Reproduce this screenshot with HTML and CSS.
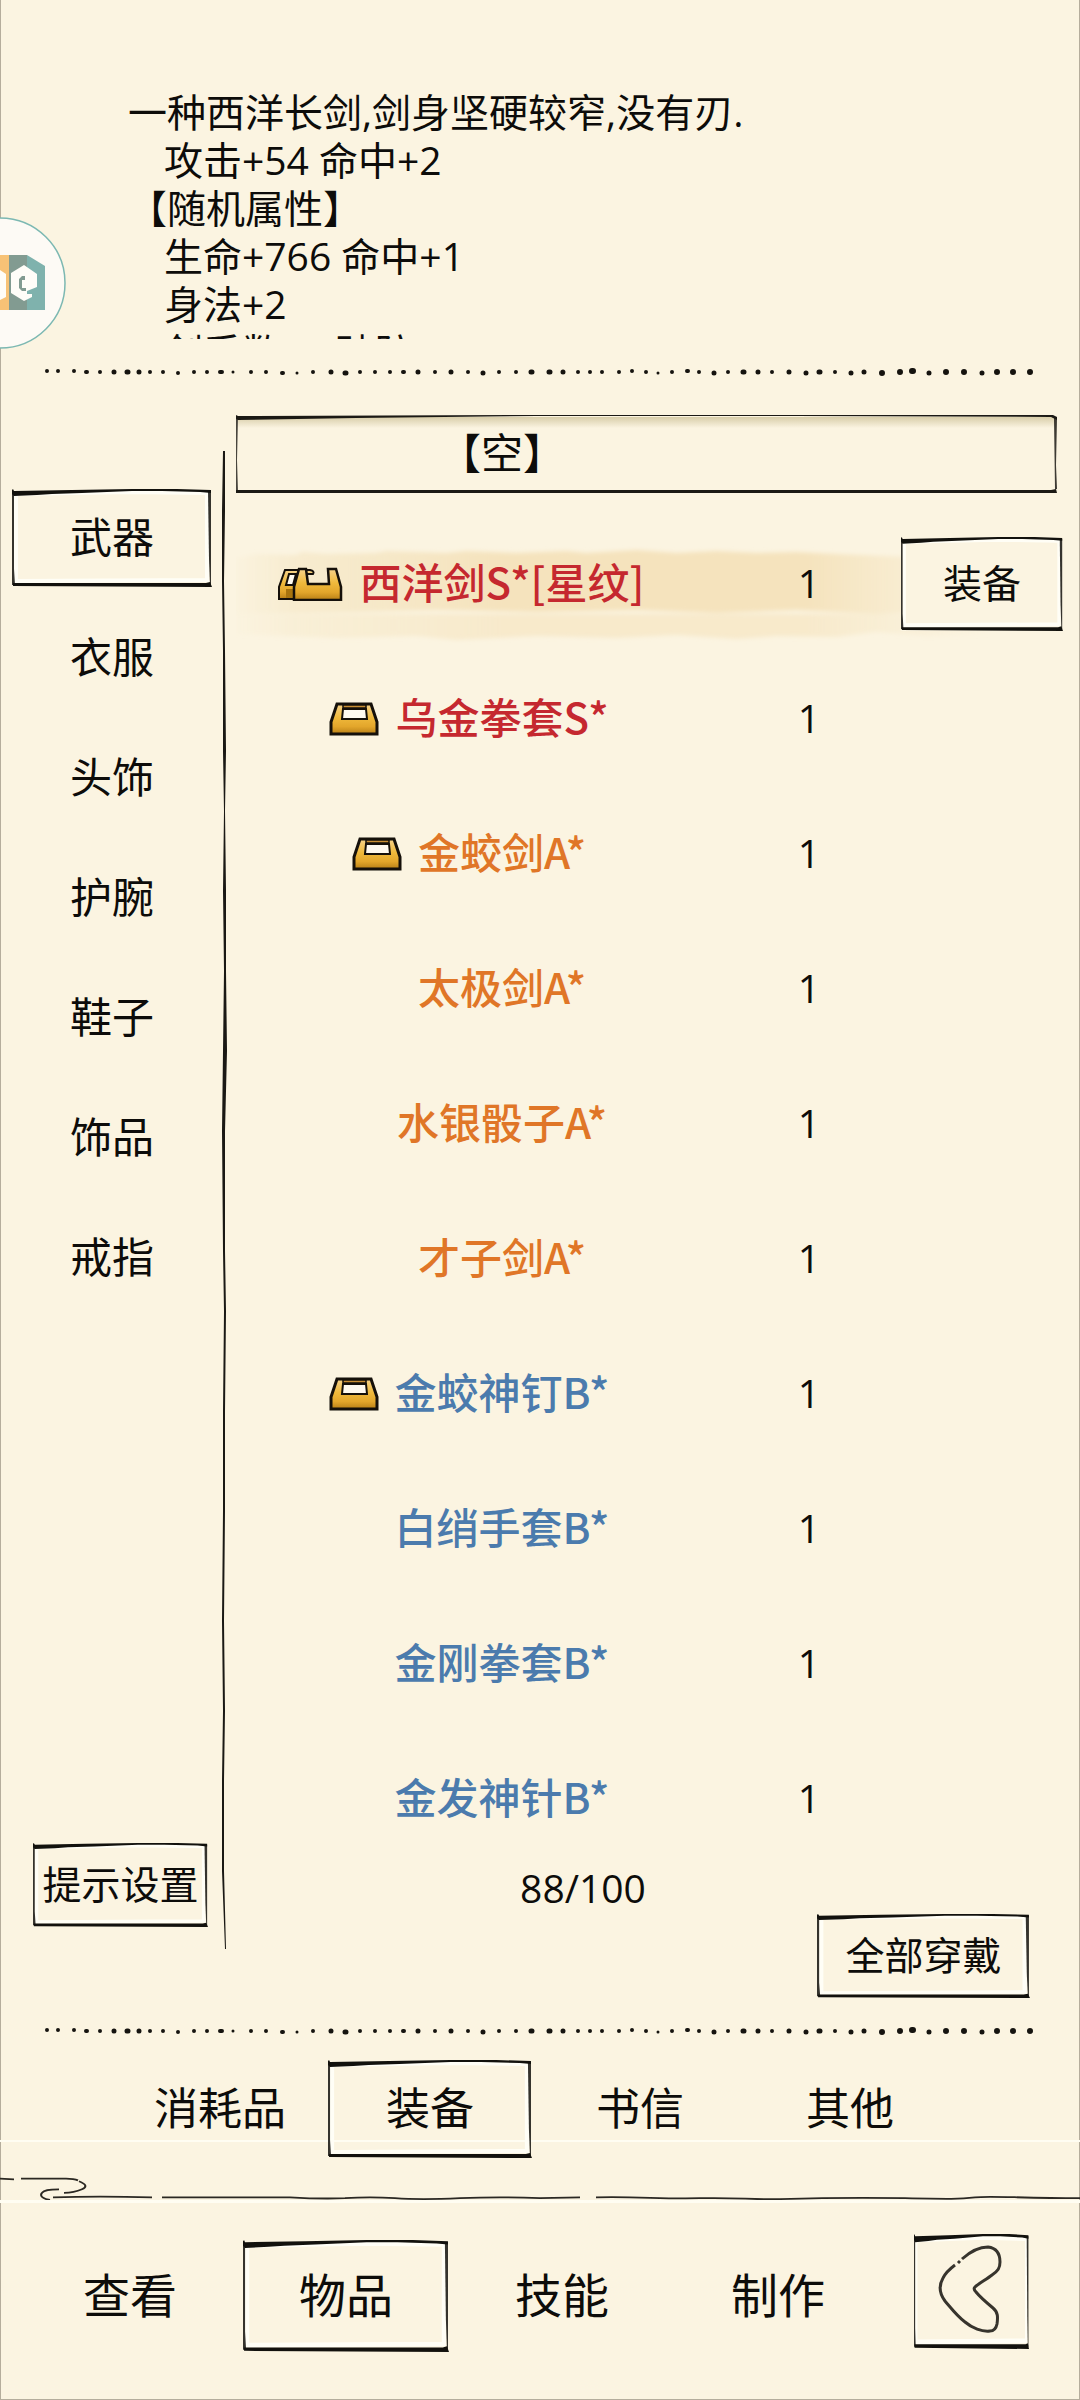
FILE: index.html
```html
<!DOCTYPE html>
<html lang="zh-CN">

<head>
    <meta charset="UTF-8">
    <meta name="viewport" content="width=device-width, initial-scale=1.0">
    <title>物品</title>
    <link rel="stylesheet" href="styles.css">
</head>

<body>
    <!-- shared drawings -->
    <svg class="defs" aria-hidden="true">
        <defs>
            <linearGradient id="gold" x1="0" y1="0" x2="0" y2="1">
                <stop offset="0" stop-color="#f6d28a" />
                <stop offset=".45" stop-color="#efb93c" />
                <stop offset=".75" stop-color="#e3a62b" />
                <stop offset="1" stop-color="#b87f16" />
            </linearGradient>
            <symbol id="ingot" viewBox="0 0 50 34">
                <path d="M8 2H42L48 20V32H2V20Z" fill="url(#gold)" stroke="#15100a" stroke-width="3" />
                <path d="M14 3H37V6H14Z" fill="#c98f35" stroke="#15100a" stroke-width="1.5" />
                <path d="M14 7H37L38 17H13Z" fill="#fffaf0" stroke="#15100a" stroke-width="2" />
            </symbol>
            <symbol id="ingots" viewBox="0 0 66 34">
                <path d="M8 3H33Q38 4 36 7H28L22 32H2V20Z" fill="url(#gold)" stroke="#15100a" stroke-width="2" />
                <path d="M12 7H19L16 18H9Z" fill="#fffaf0" stroke="#15100a" stroke-width="2" />
                <path d="M9 22H17V31H9Z" fill="#a8740f" />
                <path d="M22 2H29L31 17H52L51 2H59L64 20V33H17V20Z" fill="url(#gold)" stroke="#15100a" stroke-width="2.5" />
            </symbol>
            <symbol id="dots" viewBox="0 0 1080 10" preserveAspectRatio="none">
                <g stroke="#15130f" stroke-linecap="round" fill="none">
                    <path stroke-width="4" d="M47 4h0M58 4h0M74 4h0M86 5h1M100 5h0M150 5h0M163 5h0M178 6h0M194 5h0M207 5h0M220 5h2M251 5h0M266 5h0M282 6h1M313 5h0M360 5h0M375 5h0M390 5h0M403 5h1M435 5h0M468 5h0M499 5h0M516 5h0M578 5h0M590 5h0M602 5h0M619 5h0M632 4h0M646 5h0M672 5h0M687 4h1M699 5h0M728 5h0M772 5h0M835 5h0" />
                    <path stroke-width="3" d="M233 5h0M297 6h0M658 6h0" />
                    <path stroke-width="5" d="M114 5h0M127 5h1M139 5h0M331 5h0M345 6h1M418 5h0M451 5h0M483 6h0M531 5h1M549 5h1M563 5h0M714 6h0M743 5h1M758 5h0M789 5h0M806 6h0M819 5h1M851 6h0M864 5h0M929 6h0M982 6h0" />
                    <path stroke-width="6" d="M882 6h0M900 5h0M912 4h1M946 5h0M964 5h0M997 5h0M1013 5h0M1030 5h0" />
                </g>
            </symbol>
        </defs>
    </svg>

    <div class="page">
        <button class="floating" type="button" aria-label="悬浮菜单">
            <svg viewBox="0 0 66 132">
                <circle cx="0" cy="66" r="65" fill="#fdfaf5" stroke="#7cb8b2" stroke-width="1.5" />
                <path d="M0 38H9V93H0Z" fill="#f7c276" />
                <path d="M9 38H27V93H9Z" fill="#829b91" />
                <path d="M27 38L45 49V93H27Z" fill="#7fb2ad" />
                <path d="M0 53L6 57V80L0 83Z" fill="#fffdf8" />
                <path d="M24 48L37 57V70L27 74V77H32V80L24 84L11 76V56Z" fill="#fffdf8" />
                <path d="M22 59H25V63H22V71H26V74H22L19 71V62Z" fill="#829b91" />
            </svg>
        </button>

        <section class="info">
            <p>一种西洋长剑,剑身坚硬较窄,没有刃.</p>
            <p class="attr">攻击+54 命中+2</p>
            <p>【随机属性】</p>
            <p class="attr">生命+766 命中+1</p>
            <p class="attr">身法+2</p>
            <p class="attr">剑系数+2 破防+20</p>
        </section>

        <svg class="dots" preserveAspectRatio="none"><use href="#dots" /></svg>

        <main class="bag">
            <nav class="side">
                <button class="side-item sketch" type="button">武器</button>
                <button class="side-item" type="button">衣服</button>
                <button class="side-item" type="button">头饰</button>
                <button class="side-item" type="button">护腕</button>
                <button class="side-item" type="button">鞋子</button>
                <button class="side-item" type="button">饰品</button>
                <button class="side-item" type="button">戒指</button>
                <button class="tips sketch" type="button">提示设置</button>
            </nav>

            <svg class="divider" viewBox="0 0 8 1498" preserveAspectRatio="none">
                <path d="M3 0L5 0L5 60L4 130L5 200L6 300L5 360L6 440L6 520L7 600L5 680L5 800L6 860L5 960L5 1060L4 1170L5 1260L4 1330L4 1420L6 1498L5 1498L2 1420L2 1330L3 1260L2 1170L3 1060L3 960L4 860L3 800L2 680L3 600L4 520L3 440L4 360L3 300L3 200L2 130L2 60Z" />
            </svg>

            <div class="list-col">
                <h1 class="worn">【空】</h1>
                <ul class="items">
                    <li class="item selected">
                        <svg class="ingots"><use href="#ingots" /></svg>
                        <span class="name red">西洋剑S*[星纹]</span>
                        <span class="num">1</span>
                        <button class="equip sketch" type="button">装备</button>
                    </li>
                    <li class="item">
                        <svg class="ingot"><use href="#ingot" /></svg>
                        <span class="name red">乌金拳套S*</span>
                        <span class="num">1</span>
                    </li>
                    <li class="item">
                        <svg class="ingot"><use href="#ingot" /></svg>
                        <span class="name orange">金蛟剑A*</span>
                        <span class="num">1</span>
                    </li>
                    <li class="item">
                        <span class="name orange">太极剑A*</span>
                        <span class="num">1</span>
                    </li>
                    <li class="item">
                        <span class="name orange">水银骰子A*</span>
                        <span class="num">1</span>
                    </li>
                    <li class="item">
                        <span class="name orange">才子剑A*</span>
                        <span class="num">1</span>
                    </li>
                    <li class="item">
                        <svg class="ingot"><use href="#ingot" /></svg>
                        <span class="name blue">金蛟神钉B*</span>
                        <span class="num">1</span>
                    </li>
                    <li class="item">
                        <span class="name blue">白绡手套B*</span>
                        <span class="num">1</span>
                    </li>
                    <li class="item">
                        <span class="name blue">金刚拳套B*</span>
                        <span class="num">1</span>
                    </li>
                    <li class="item">
                        <span class="name blue">金发神针B*</span>
                        <span class="num">1</span>
                    </li>
                </ul>
                <p class="capacity">88/100</p>
                <button class="wear-all sketch" type="button">全部穿戴</button>
            </div>
        </main>

        <svg class="dots" preserveAspectRatio="none"><use href="#dots" /></svg>

        <nav class="tabs">
            <button type="button">消耗品</button>
            <button class="sketch" type="button">装备</button>
            <button type="button">书信</button>
            <button type="button">其他</button>
        </nav>

        <svg class="cloud" viewBox="0 0 1080 28" preserveAspectRatio="none">
            <path d="M0 4L14 5M21 4H66Q74 4 78 6M79 7Q90 12 82 16Q74 20 64 20M59 16C48 16 44 17 42 20C39 24 44 27 50 28" />
            <path d="M53 25C80 24 120 24 152 25M162 25H290Q320 27 345 26Q370 24 395 26T460 26T540 26L580 25M596 25C640 24 660 27 700 26S750 28 780 27S860 25 905 26S960 27 975 25S1020 26 1080 26" />
        </svg>

        <footer class="menu">
            <button type="button">查看</button>
            <button class="sketch" type="button">物品</button>
            <button type="button">技能</button>
            <button type="button">制作</button>
            <button class="back sketch" type="button" aria-label="返回">
                <svg viewBox="14 13 115 115">
                    <path d="M62 38C72 29 82 26 88 26C96 27 100 32 100 41C100 47 98 50 92 54C87 58 78 63 75 66Q73 68 76 71C80 76 87 82 93 87C98 91 98 96 97 103C96 108 94 110 90 110C82 111 72 107 65 101C57 95 51 87 45 80C39 72 39 64 43 57C46 51 51 47 55 44M58 42L60 40" />
                </svg>
            </button>
        </footer>
    </div>
</body>

</html>
```
FILE: styles.css
```css
* {
    box-sizing: border-box;
}

body {
    margin: 0;
    background-color: #fbf4e1;
    color: #0d0c0a;
    font-family: "Open Sans", "Noto Sans CJK SC", sans-serif;
    font-size: 39px;
    line-height: 48px;
}

h1, p, ul {
    margin: 0;
    padding: 0;
    font-weight: normal;
}

button {
    padding: 0 0 2px;
    border: none;
    background: none;
    color: inherit;
    font-family: inherit;
    font-size: inherit;
    line-height: inherit;
    cursor: pointer;
}

svg {
    display: block;
}

.defs {
    position: absolute;
    width: 0;
    height: 0;
}

.page {
    position: relative;
    min-height: 100vh;
    overflow: hidden;
    box-shadow: inset 1px 0 #b5ad9c, inset -1px -1px #b5ad9c;
}

/* hand drawn ink frame, stretched to the button */
.sketch {
    background: url("data:image/svg+xml,%3Csvg xmlns='http://www.w3.org/2000/svg' viewBox='0 0 200 98' preserveAspectRatio='none'%3E%3Cpath d='M4 5L60 4L120 3L195 4L195 91L4 92Z' fill='none' stroke='%23fffef6' stroke-width='4'/%3E%3Cg fill='%2312110d'%3E%3Cpath d='M0 1L1 0L2 2L60 1L120 0L165 0L199 1L199 4L188 3L150 2L120 2L70 4L40 5L25 6L2 7L0 5Z'/%3E%3Cpath d='M0 2H2L2 60L2 80L3 96H0L0 70Z' opacity='.85'/%3E%3Cpath d='M196 2H199L199 60L199 96H198L197 70Z' opacity='.85'/%3E%3Cpath d='M1 94H194L198 93L200 98L1 97Z'/%3E%3C/g%3E%3C/svg%3E") center / 100% 100% no-repeat;
}

/* floating launcher on the screen edge */
.floating {
    position: absolute;
    left: 0;
    top: 217px;
}

.floating svg {
    width: 66px;
    height: 132px;
}

.info {
    height: 339px;
    padding: 88px 128px 0;
    overflow: hidden;
    white-space: nowrap;
}

.info .attr {
    padding-left: 36px;
}

.dots {
    width: 100%;
    height: 10px;
    margin: 28px 0 24px;
}

.bag {
    display: flex;
    padding: 14px 17px 0 12px;
}

.side {
    display: flex;
    flex-direction: column;
    gap: 22px;
    width: 200px;
    margin: 74px 0 71px;
}

.side-item {
    height: 98px;
    font-size: 42px;
}

.tips {
    align-self: flex-end;
    width: 175px;
    height: 84px;
    margin: auto 4px 0 0;
    white-space: nowrap;
}

.divider {
    width: 8px;
    height: 1498px;
    margin: 36px 8px 0;
    fill: #1a1814;
}

.list-col {
    display: flex;
    flex-direction: column;
    flex: 1;
}

.worn {
    height: 78px;
    margin: 0 6px 23px 0;
    padding-right: 289px;
    font-size: 42px;
    line-height: 76px;
    text-align: center;
    background: url("data:image/svg+xml,%3Csvg xmlns='http://www.w3.org/2000/svg' viewBox='0 0 821 78' preserveAspectRatio='none'%3E%3Cdefs%3E%3ClinearGradient id='s' x2='0' y2='1'%3E%3Cstop stop-color='%23d8cda9'/%3E%3Cstop offset='1' stop-color='%23fbf4e1'/%3E%3C/linearGradient%3E%3C/defs%3E%3Cpath d='M2 2H819V13H2Z' fill='url(%23s)'/%3E%3Cg fill='%231b1914'%3E%3Cpath d='M0 0L2 1L300 0H817L821 2L821 5L815 2L560 1H300L120 3L2 5L0 4Z'/%3E%3Cpath d='M0 2H2L1 45L2 77H0Z' opacity='.8'/%3E%3Cpath d='M818 3H821L820 50L821 74H819Z' opacity='.85'/%3E%3Cpath d='M0 75H815L820 74L821 78H0Z'/%3E%3C/g%3E%3C/svg%3E") center / 100% 100% no-repeat;
}

.items {
    list-style: none;
}

.item {
    display: grid;
    grid-template-columns: 1fr auto 1fr 82px 213px;
    align-items: center;
    height: 135px;
}

/* watercolour stroke behind the chosen row */
.selected {
    background: url("data:image/svg+xml,%3Csvg xmlns='http://www.w3.org/2000/svg' viewBox='0 0 760 135' preserveAspectRatio='none'%3E%3Cdefs%3E%3ClinearGradient id='a'%3E%3Cstop stop-color='%23f5e6c3' stop-opacity='.1'/%3E%3Cstop offset='.08' stop-color='%23f5e6c3' stop-opacity='.6'/%3E%3Cstop offset='.35' stop-color='%23f5e3bd'/%3E%3Cstop offset='.75' stop-color='%23f5e3bd'/%3E%3Cstop offset='1' stop-color='%23f5e6c3' stop-opacity='0'/%3E%3C/linearGradient%3E%3Cfilter id='b' x='-5%25' y='-20%25' width='110%25' height='140%25'%3E%3CfeGaussianBlur stdDeviation='2'/%3E%3C/filter%3E%3C/defs%3E%3Cg fill='url(%23a)' filter='url(%23b)'%3E%3Cpath d='M0 42L20 38L60 39L66 36L90 38L140 37L150 35L210 37L230 35L280 37L330 35L350 37L400 34L440 37L480 35L520 37L560 36L600 38L650 40L760 44V92L690 96L640 98L560 94L480 97L400 94L300 96L200 94L120 96L0 98Z'/%3E%3Cpath opacity='.6' d='M0 98H760V118L690 120L640 116L600 121L540 120L500 123L440 119L380 122L300 120L220 124L180 120L100 122L0 118Z'/%3E%3C/g%3E%3C/svg%3E") left / 92% 100% no-repeat;
}

.item svg {
    grid-column: 1;
    justify-self: end;
    margin-right: 16px;
}

.ingot {
    width: 50px;
    height: 34px;
}

.ingots {
    width: 66px;
    height: 34px;
}

.name {
    grid-column: 2;
    padding-bottom: 6px;
    font-family: "Noto Sans CJK SC", sans-serif;
    font-size: 42px;
    font-weight: 500;
    white-space: nowrap;
}

.red {
    color: #c5282f;
}

.orange {
    color: #e07627;
}

.blue {
    color: #4b7bad;
}

.num {
    grid-column: 4;
    padding-bottom: 2px;
    text-align: center;
}

.equip {
    justify-self: end;
    width: 162px;
    height: 94px;
    background-color: #fbf4e1;
}

.capacity {
    padding-right: 133px;
    line-height: 44px;
    text-align: center;
}

.wear-all {
    align-self: flex-end;
    width: 213px;
    height: 84px;
    margin: 4px 33px 0 0;
}

.tabs {
    display: grid;
    grid-template-columns: repeat(4, 1fr);
    padding: 0 125px 0 115px;
    font-size: 44px;
    background: linear-gradient(#fffdf2, #fffdf2) 0 80px / 100% 2px no-repeat;
}

.tabs button {
    height: 98px;
    margin: 0 3px;
}

.cloud {
    width: 100%;
    height: 45px;
    padding-top: 17px;
    border-bottom: 3px solid #fffdf2;
    fill: none;
    stroke: #2b2822;
    stroke-width: 2;
}

.menu {
    display: flex;
    align-items: center;
    padding: 31px 51px 47px 22px;
    font-size: 47px;
}

.menu button {
    flex: 1;
    height: 112px;
    margin: 4px 5px 0;
}

.menu .back {
    flex: none;
    width: 115px;
    height: 115px;
    margin: 0 0 4px 28px;
    padding: 0;
}

.back svg {
    width: 100%;
    fill: none;
    stroke: #37342d;
    stroke-width: 3;
}
```
